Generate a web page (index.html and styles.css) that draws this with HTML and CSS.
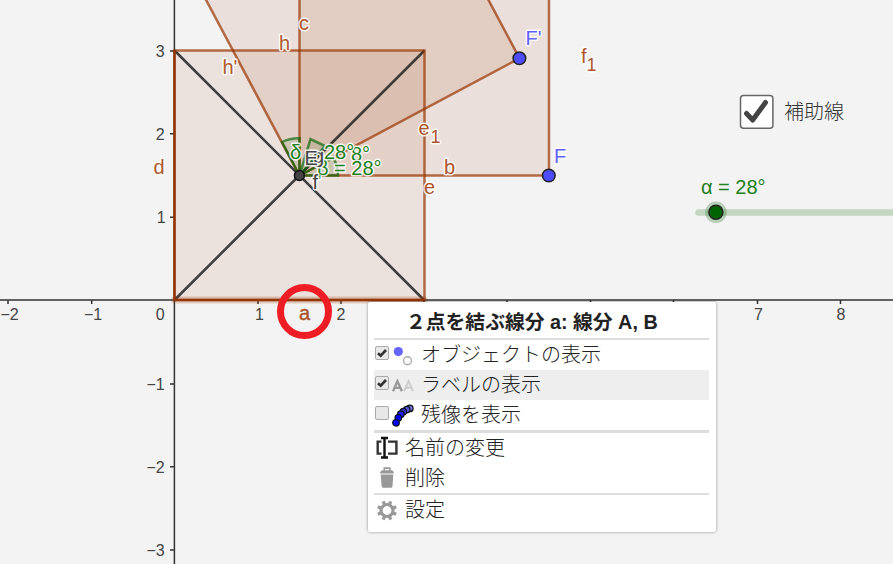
FILE: index.html
```html
<!DOCTYPE html>
<html lang="ja">
<head>
<meta charset="utf-8">
<title>グラフィックスビュー</title>
<link rel="stylesheet" href="styles.css">
</head>
<body>
<main class="view">
<svg class="plot" width="893" height="564" viewBox="0 0 893 564">
  <g class="fill">
    <path d="M174.5 50.5H424.5V300H174.5Z"/>
    <path d="M299.5 175.5V-74H549V175.5Z"/>
    <path d="M299.5 175.5L519.5 58.3L402.3 -162L182.3 -44.7Z"/>
  </g>
  <g class="axis">
    <path d="M0 300H893M174.4 0V564"/>
    <path d="M8 300v4M91.7 300v4M258 300v4M341 300v4M424 300v4M507 300v4M590.5 300v4M673.5 300v4M757.5 300v4M840.5 300v4"/>
    <path d="M170 51h4M170 133.7h4M170 217.3h4M170 384h4M170 466.7h4M170 550h4"/>
  </g>
  <g class="black">
    <path d="M174.5 50.5L424 300M174.5 300L424.5 50.5"/>
  </g>
  <path class="halo" d="M174.5 300H424.5"/>
  <g class="edge">
    <path d="M174.5 300V50.5H424.5V300Z"/>
    <path d="M174.5 300H424.5M174.5 50.5V300"/>
    <path d="M299.5 -74V175.5H549V-74"/>
    <path d="M182.3 -44.7L299.5 175.5L519.5 58.3L402.3 -162"/>
  </g>
  <g class="angle">
    <path d="M299.5 175.5L282 142Q290 138 299.5 138.3Z"/>
    <path d="M299.5 175.5L310.5 139L325 146Z"/>
    <path d="M299.5 175.5H338Q338 165 333 158Z"/>
  </g>
  <g class="green">
    <text x="290" y="159">δ</text>
    <text x="351" y="161">8°</text>
    <text x="324" y="159">28°</text>
    <text x="317" y="175">β = 28°</text>
  </g>
  <g class="dark"><text x="313" y="163">g</text><text x="304.5" y="165">E</text><text x="312.5" y="189">f</text></g>
  <g class="brown">
    <text x="299" y="30">c</text><text x="279" y="50">h</text><text x="222.5" y="74">h'</text>
    <text x="153.5" y="174">d</text><text x="418.5" y="135">e</text><text class="sub" x="430.5" y="143">1</text>
    <text x="444" y="174">b</text><text x="424" y="194">e</text>
    <text x="581" y="63">f</text><text class="sub" x="586.5" y="71">1</text><text class="hot" x="299" y="320">a</text>
  </g>
  <g class="blue"><text x="525.5" y="45">F'</text><text x="554" y="163">F</text></g>
  <g class="point"><circle cx="519.4" cy="58.3" r="6.3"/><circle cx="548.8" cy="175.5" r="6.3"/></g>
  <circle class="center" cx="299.4" cy="175.5" r="5"/>
  <g class="num">
    <text x="9.5" y="320">−2</text><text x="93" y="320">−1</text><text x="160.2" y="320">0</text>
    <text x="259.5" y="320">1</text><text x="341" y="320">2</text><text x="758.5" y="320">7</text><text x="841" y="320">8</text>
    <text x="160.2" y="57">3</text><text x="160.2" y="140">2</text><text x="161.2" y="223">1</text>
    <text x="155.5" y="390">−1</text><text x="155.5" y="472.5">−2</text><text x="155.5" y="556">−3</text>
  </g>
  <circle class="ring" cx="304.5" cy="311.5" r="24"/>
  <path class="track" d="M698.5 212.4H900"/>
  <circle class="thumb-halo" cx="715.9" cy="212.3" r="10.8"/>
  <circle class="thumb" cx="715.9" cy="212.3" r="7"/>
  <text class="slider-text" x="701" y="194">α = 28°</text>
  <rect class="box" x="740.5" y="95.6" width="32.4" height="32.6" rx="3"/>
  <path class="tick" d="M746.5 113.5L752.7 120L765.5 102.5"/>
  <text class="helper" x="784" y="119">補助線</text>
</svg>
<section class="menu">
  <h1 class="title">２点を結ぶ線分 a: 線分 A, B</h1>
  <ul class="group">
    <li class="item">
      <svg class="check" viewBox="0 0 14 14"><rect class="check-box" x=".5" y=".5" width="13" height="13" rx="1.5"/><path class="check-mark" d="M3 7.2L5.7 9.7L11 4"/></svg>
      <svg class="icon" viewBox="0 0 22 22"><circle cx="6.3" cy="7.6" r="4.6" fill="#6666ff"/><circle cx="15.5" cy="16.8" r="4" fill="#fff" stroke="#aaa" stroke-width="1.4"/></svg>
      <span>オブジェクトの表示</span>
    </li>
    <li class="item active">
      <svg class="check" viewBox="0 0 14 14"><rect class="check-box" x=".5" y=".5" width="13" height="13" rx="1.5"/><path class="check-mark" d="M3 7.2L5.7 9.7L11 4"/></svg>
      <svg class="icon" viewBox="0 0 22 22"><path d="M1 17.2L5.4 7.2L9.9 17.2M2.5 13.8H8.3" fill="none" stroke="#999" stroke-width="2.3"/><path d="M12.2 17.2L16.5 7.2L21 17.2M13.8 13.8H19.4" fill="none" stroke="#ccc" stroke-width="2"/></svg>
      <span>ラベルの表示</span>
    </li>
    <li class="item">
      <svg class="check" viewBox="0 0 14 14"><rect class="check-box" x=".5" y=".5" width="13" height="13" rx="1.5"/></svg>
      <svg class="icon" viewBox="0 0 22 22"><g stroke="#111" stroke-width="1.2"><circle cx="17.8" cy="4.4" r="3.3" fill="#7070dd"/><circle cx="14.7" cy="5.6" r="3.3" fill="#5555dd"/><circle cx="11.3" cy="7.6" r="3.3" fill="#3333dd"/><circle cx="8.8" cy="10.2" r="3.3" fill="#1c1cee"/><circle cx="6.3" cy="13.8" r="3.3" fill="#0000ee"/><circle cx="4" cy="18.8" r="3.3" fill="#00f"/></g></svg>
      <span>残像を表示</span>
    </li>
  </ul>
  <ul class="group commands">
    <li class="item">
      <svg class="icon" viewBox="0 0 22 22"><path d="M5.5 4.6H1.7V16.6H5.5M12 4.6H20.4V16.6H12" fill="none" stroke="#333" stroke-width="2.4"/><path d="M5 1H12M5 20.5H12M8.5 1V20.5" fill="none" stroke="#111" stroke-width="2.4"/></svg>
      <span>名前の変更</span>
    </li>
    <li class="item">
      <svg class="icon" viewBox="0 0 22 22"><path d="M4.7 7.5H17.3L16.5 19.2Q16.4 20.7 15 20.7H7.2Q5.8 20.7 5.6 19.2ZM4.2 6.5V5L5.8 3.2H16.2L17.8 5V6.5Z" fill="#999"/><path d="M8.3 3.8V1.2H13.8V3.8" fill="none" stroke="#999" stroke-width="1.7"/></svg>
      <span>削除</span>
    </li>
  </ul>
  <ul class="group">
    <li class="item">
      <svg class="icon" viewBox="0 0 22 22"><g fill="none" stroke="#999"><circle cx="11" cy="11.5" r="6" stroke-width="3.2"/><path d="M8.7 5.9L7.2 2.3M13.3 17.1L14.8 20.7M13.3 5.9L14.8 2.3M8.7 17.1L7.2 20.7M5.4 9.2L1.8 7.7M16.6 13.8L20.2 15.3M5.4 13.8L1.8 15.3M16.6 9.2L20.2 7.7" stroke-width="3.2"/></g></svg>
      <span>設定</span>
    </li>
  </ul>
</section>
</main>
</body>
</html>
```
FILE: styles.css
```css
* { box-sizing: border-box; }
body { margin: 0; overflow: hidden; background: #f3f3f3; font-family: "Liberation Sans", "Noto Sans CJK JP", sans-serif; }
.view { position: relative; width: 893px; height: 564px; overflow: hidden; }
.plot { display: block; font-size: 20px; }
.fill { fill: #993300; fill-opacity: .1; }
.fill path:first-child { fill-opacity: .09; }
.axis { fill: none; stroke: #333; stroke-width: 1.5; }
.black { fill: none; stroke: #222; stroke-opacity: .85; stroke-width: 2.6; }
.halo { stroke: #993300; stroke-opacity: .22; stroke-width: 7; stroke-linecap: round; }
.edge { fill: none; stroke: #993300; stroke-opacity: .7; stroke-width: 2.5; }
.angle { fill: #006400; fill-opacity: .1; stroke: #006400; stroke-opacity: .65; stroke-width: 2.5; }
.green, .brown, .blue, .dark { paint-order: stroke; stroke: rgba(255, 255, 255, .85); stroke-width: 3px; stroke-linejoin: round; }
.green { fill: #208020; }
.brown { fill: #ad562e; }
.blue { fill: #6161ff; }
.dark { fill: #444; }
.sub { font-size: 18px; }
.hot { font-size: 20px; stroke: #ad562e; stroke-width: .4px; }
.point { fill: #4d4dff; stroke: #222; stroke-width: 1.5; }
.center { fill: #444; stroke: #111; stroke-width: 1.5; }
.num { fill: #444; font-size: 16px; text-anchor: middle; }
.ring { fill: none; stroke: #ee1c25; stroke-width: 7; }
.track { stroke: #006400; stroke-opacity: .2; stroke-width: 6.5; stroke-linecap: round; }
.thumb-halo { fill: #006400; fill-opacity: .25; }
.thumb { fill: #006400; stroke: #222; stroke-width: 1.5; }
.slider-text { fill: #208020; }
.box { fill: #fff; stroke: #666; stroke-width: 1.5; }
.tick { fill: none; stroke: #444; stroke-width: 5; stroke-linecap: round; stroke-linejoin: round; }
.helper { fill: #333; font-family: "Noto Sans CJK JP", sans-serif; font-weight: 300; }
.menu { position: absolute; left: 368px; top: 302px; width: 348px; height: 230px; padding: 0 7px 0 6px; background: #fff; border-radius: 2px; box-shadow: 0 0 3px rgba(0, 0, 0, .45); color: #222; }
.title { height: 36px; margin: 0; padding-left: 32px; font-size: 19.8px; line-height: 41px; font-weight: 700; white-space: nowrap; }
.group { margin: 0; padding: 0; list-style: none; border-top: 2px solid #ddd; }
.commands { border-top-width: 3px; }
.item { display: flex; align-items: center; height: 30px; font: 300 20px/28px "Noto Sans CJK JP", sans-serif; white-space: nowrap; }
.item span { margin-left: 7px; position: relative; top: -1px; }
.active { background: #eee; }
.check { width: 14px; height: 14px; margin: 0 3px 4px 1px; }
.check + .icon { margin-left: 0; }
.check-box { fill: #e8e8e8; stroke: #aaa; }
.check-mark { fill: none; stroke: #333; stroke-width: 2.7; }
.icon { width: 22px; height: 22px; margin-left: 2px; overflow: visible; }
```
